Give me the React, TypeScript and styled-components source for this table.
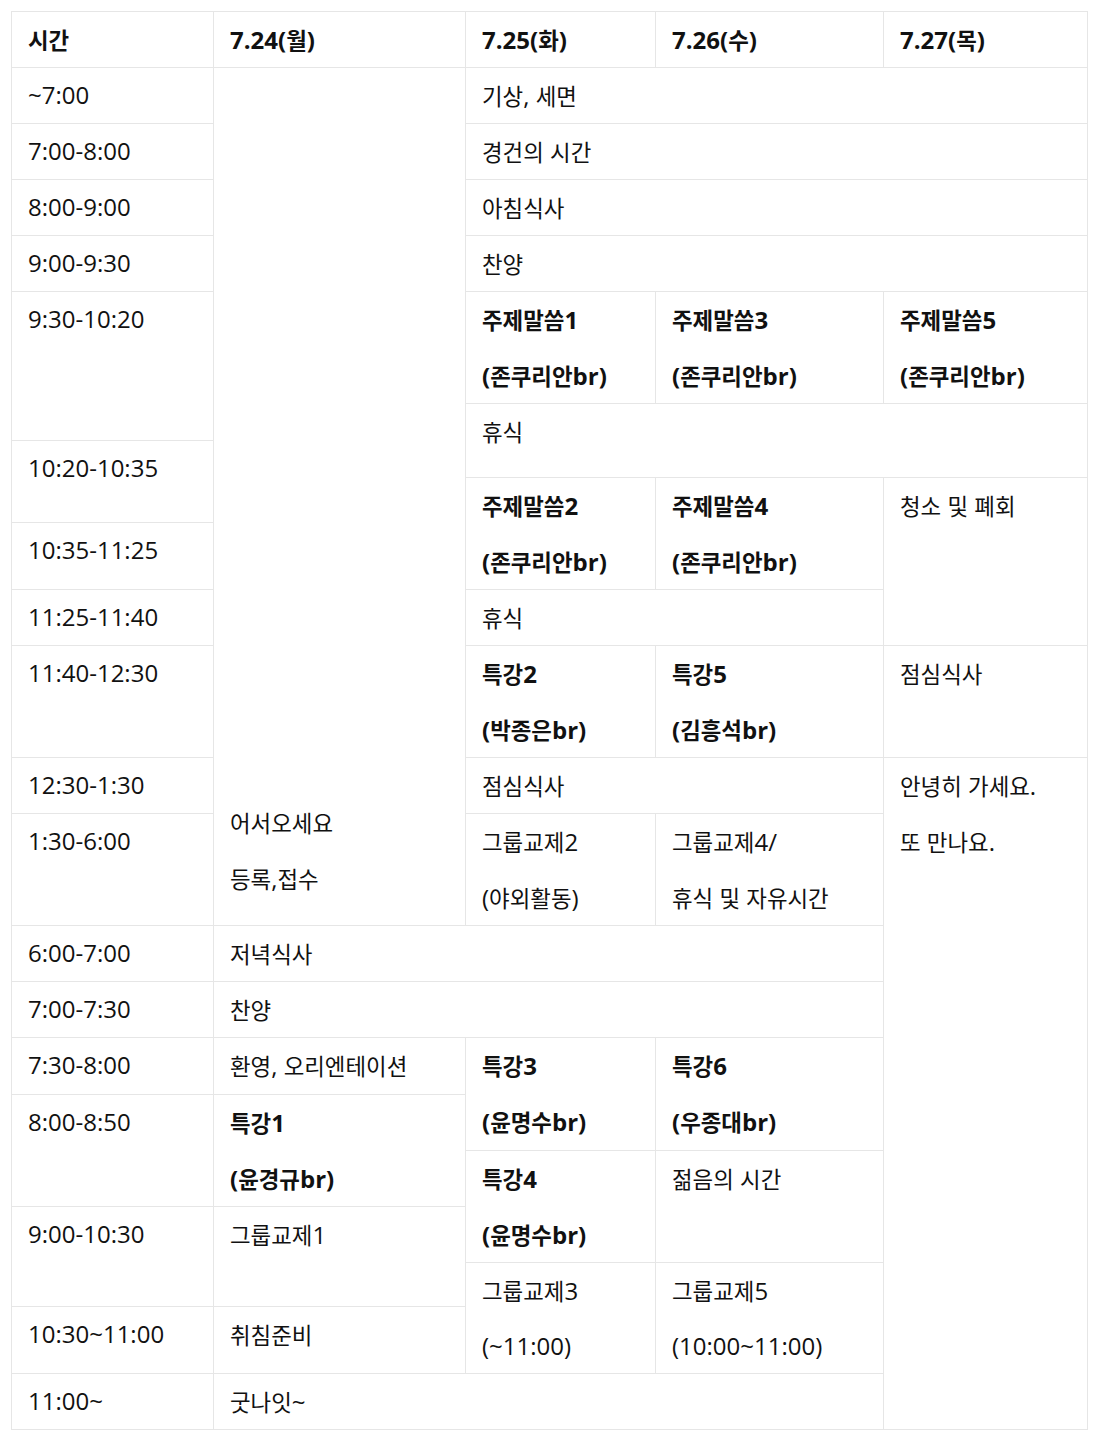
import * as React from 'react';
import { createGlobalStyle, styled } from 'styled-components';

const GlobalStyle = createGlobalStyle`
  body {
    margin: 0;
    background: #fff;
    color: #111;
    font-family: "Open Sans", "Noto Sans CJK KR", sans-serif;
  }
`;

// row tracks between 1px grid lines, measured from the schedule sheet
const ROWS = [55, 55, 55, 55, 55, 111, 36, 36, 44, 66, 55, 111, 55, 111, 55, 55, 56, 55, 55, 55, 43, 66, 55];
const COLS = [201, 251, 189, 227, 203];

const Page = styled.div`
  padding: 11px 0 0 11px;
`;

const Sheet = styled.div`
  display: grid;
  grid-template-columns: ${COLS.map((c) => `${c}px`).join(' ')};
  grid-template-rows: ${ROWS.map((r) => `${r}px`).join(' ')};
  gap: 1px;
  padding: 1px;
  width: max-content;
  background-color: #e6e6e6;
`;

const Cell = styled.div<{ $col: string; $row: string; $bold?: boolean; $bottom?: boolean }>`
  grid-column: ${(p) => p.$col};
  grid-row: ${(p) => p.$row};
  background-color: #fff;
  padding: 0 16px ${(p) => (p.$bottom ? '18px' : '0')};
  display: flex;
  flex-direction: column;
  justify-content: ${(p) => (p.$bottom ? 'flex-end' : 'flex-start')};
  font-size: 24px;
  font-weight: ${(p) => (p.$bold ? 700 : 400)};
  line-height: 54px;
  white-space: nowrap;
`;

const Line = styled.div`
  height: 56px;
  flex-shrink: 0;
`;

const Hangul = styled.span`
  font-family: "Noto Sans CJK KR", sans-serif;
  font-size: 22.4px;
`;

const HANGUL_RUN = /([\u1100-\u11FF\u3130-\u318F\uAC00-\uD7AF]+)/;

const Txt = ({ text }: { text: string }) => (
  <>
    {text.split(HANGUL_RUN).map((part, i) => (i % 2 === 1 ? <Hangul key={i}>{part}</Hangul> : part))}
  </>
);

type Entry = {
  col: string;
  row: string;
  lines: string[];
  bold?: boolean;
  bottom?: boolean;
};

const times: [string, string][] = [
  ['~7:00', '2 / 3'],
  ['7:00-8:00', '3 / 4'],
  ['8:00-9:00', '4 / 5'],
  ['9:00-9:30', '5 / 6'],
  ['9:30-10:20', '6 / 8'],
  ['10:20-10:35', '8 / 10'],
  ['10:35-11:25', '10 / 11'],
  ['11:25-11:40', '11 / 12'],
  ['11:40-12:30', '12 / 13'],
  ['12:30-1:30', '13 / 14'],
  ['1:30-6:00', '14 / 15'],
  ['6:00-7:00', '15 / 16'],
  ['7:00-7:30', '16 / 17'],
  ['7:30-8:00', '17 / 18'],
  ['8:00-8:50', '18 / 20'],
  ['9:00-10:30', '20 / 22'],
  ['10:30~11:00', '22 / 23'],
  ['11:00~', '23 / 24'],
];

const entries: Entry[] = [
  { col: '1 / 2', row: '1 / 2', lines: ['시간'], bold: true },
  { col: '2 / 3', row: '1 / 2', lines: ['7.24(월)'], bold: true },
  { col: '3 / 4', row: '1 / 2', lines: ['7.25(화)'], bold: true },
  { col: '4 / 5', row: '1 / 2', lines: ['7.26(수)'], bold: true },
  { col: '5 / 6', row: '1 / 2', lines: ['7.27(목)'], bold: true },
  ...times.map(([t, row]) => ({ col: '1 / 2', row, lines: [t] })),
  { col: '2 / 3', row: '2 / 15', lines: ['어서오세요', '등록,접수'], bottom: true },
  { col: '3 / 6', row: '2 / 3', lines: ['기상, 세면'] },
  { col: '3 / 6', row: '3 / 4', lines: ['경건의 시간'] },
  { col: '3 / 6', row: '4 / 5', lines: ['아침식사'] },
  { col: '3 / 6', row: '5 / 6', lines: ['찬양'] },
  { col: '3 / 4', row: '6 / 7', lines: ['주제말씀1', '(존쿠리안br)'], bold: true },
  { col: '4 / 5', row: '6 / 7', lines: ['주제말씀3', '(존쿠리안br)'], bold: true },
  { col: '5 / 6', row: '6 / 7', lines: ['주제말씀5', '(존쿠리안br)'], bold: true },
  { col: '3 / 6', row: '7 / 9', lines: ['휴식'] },
  { col: '3 / 4', row: '9 / 11', lines: ['주제말씀2', '(존쿠리안br)'], bold: true },
  { col: '4 / 5', row: '9 / 11', lines: ['주제말씀4', '(존쿠리안br)'], bold: true },
  { col: '5 / 6', row: '9 / 12', lines: ['청소 및 폐회'] },
  { col: '3 / 5', row: '11 / 12', lines: ['휴식'] },
  { col: '3 / 4', row: '12 / 13', lines: ['특강2', '(박종은br)'], bold: true },
  { col: '4 / 5', row: '12 / 13', lines: ['특강5', '(김흥석br)'], bold: true },
  { col: '5 / 6', row: '12 / 13', lines: ['점심식사'] },
  { col: '3 / 5', row: '13 / 14', lines: ['점심식사'] },
  { col: '5 / 6', row: '13 / 24', lines: ['안녕히 가세요.', '또 만나요.'] },
  { col: '3 / 4', row: '14 / 15', lines: ['그룹교제2', '(야외활동)'] },
  { col: '4 / 5', row: '14 / 15', lines: ['그룹교제4/', '휴식 및 자유시간'] },
  { col: '2 / 5', row: '15 / 16', lines: ['저녁식사'] },
  { col: '2 / 5', row: '16 / 17', lines: ['찬양'] },
  { col: '2 / 3', row: '17 / 18', lines: ['환영, 오리엔테이션'] },
  { col: '3 / 4', row: '17 / 19', lines: ['특강3', '(윤명수br)'], bold: true },
  { col: '4 / 5', row: '17 / 19', lines: ['특강6', '(우종대br)'], bold: true },
  { col: '2 / 3', row: '18 / 20', lines: ['특강1', '(윤경규br)'], bold: true },
  { col: '3 / 4', row: '19 / 21', lines: ['특강4', '(윤명수br)'], bold: true },
  { col: '4 / 5', row: '19 / 21', lines: ['젊음의 시간'] },
  { col: '2 / 3', row: '20 / 22', lines: ['그룹교제1'] },
  { col: '3 / 4', row: '21 / 23', lines: ['그룹교제3', '(~11:00)'] },
  { col: '4 / 5', row: '21 / 23', lines: ['그룹교제5', '(10:00~11:00)'] },
  { col: '2 / 3', row: '22 / 23', lines: ['취침준비'] },
  { col: '2 / 5', row: '23 / 24', lines: ['굿나잇~'] },
];

export default function App() {
  return (
    <>
      <GlobalStyle />
      <Page>
        <Sheet>
          {entries.map((e, i) => (
            <Cell key={i} $col={e.col} $row={e.row} $bold={e.bold} $bottom={e.bottom}>
              {e.lines.map((l, j) => (
                <Line key={j}>
                  <Txt text={l} />
                </Line>
              ))}
            </Cell>
          ))}
        </Sheet>
      </Page>
    </>
  );
}
